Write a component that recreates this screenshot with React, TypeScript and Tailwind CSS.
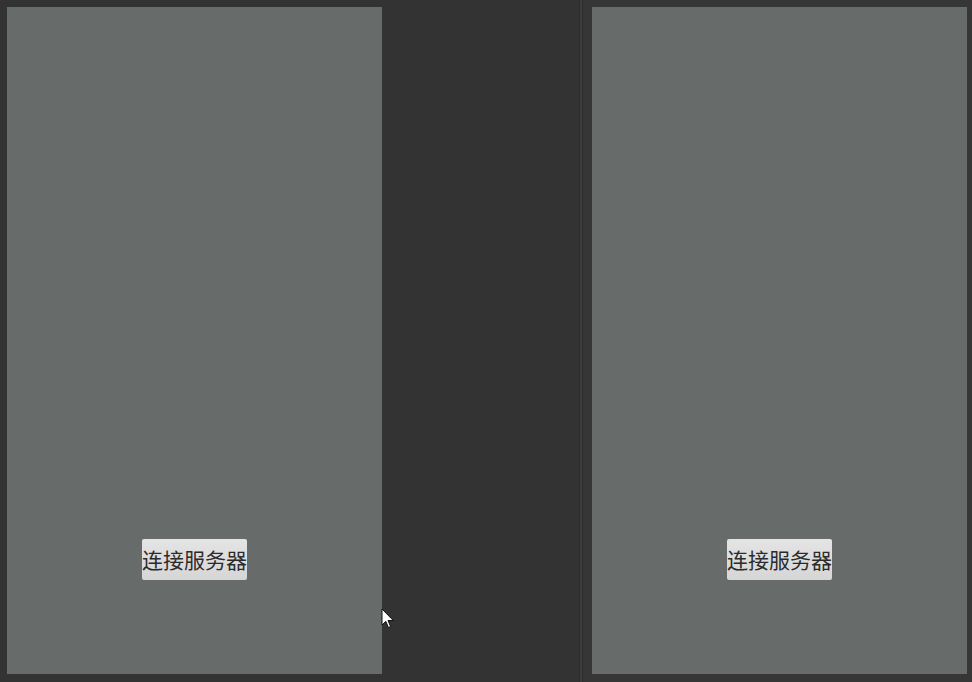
import React from "react";

function ConnectButton() {
  return (
    <button
      className="h-[41px] w-[105px] rounded-[2px] bg-gradient-to-b from-[#e4e4e4] to-[#d6d6d6] text-[21px] leading-none text-[#2b2b2b] whitespace-nowrap"
      style={{ fontFamily: '"Noto Sans CJK SC", "Noto Sans", sans-serif' }}
    >
      连接服务器
    </button>
  );
}

function Panel() {
  return (
    <div className="flex h-[667px] w-[375px] flex-col items-center justify-end bg-[#676b69] pb-[94px]">
      <ConnectButton />
    </div>
  );
}

function Pointer() {
  return (
    <svg
      className="absolute left-[381px] top-[608px]"
      width="15"
      height="22"
      viewBox="0 0 15 22"
    >
      <path
        d="M1 1 L1 17 L4.8 13.3 L7.4 19.5 L9.6 18.5 L7 12.5 L12.3 12.5 Z"
        fill="#ffffff"
        stroke="#111111"
        strokeWidth="1"
        strokeLinejoin="round"
      />
    </svg>
  );
}

export default function App() {
  return (
    <div className="relative flex h-[682px] w-[972px] bg-[#363636]">
      <div className="flex h-full w-[579px] bg-[#333333]">
        <div className="pl-[7px] pt-[7px]">
          <Panel />
        </div>
      </div>
      <div className="flex h-full w-[4px]">
        <div className="w-[1px] bg-[#2c2c2c]" />
        <div className="w-[2px] bg-[#3d3d3d]" />
        <div className="w-[1px] bg-[#2c2c2c]" />
      </div>
      <div className="flex h-full flex-1 bg-[#363636] pl-[9px] pt-[7px]">
        <Panel />
      </div>
      <Pointer />
    </div>
  );
}
